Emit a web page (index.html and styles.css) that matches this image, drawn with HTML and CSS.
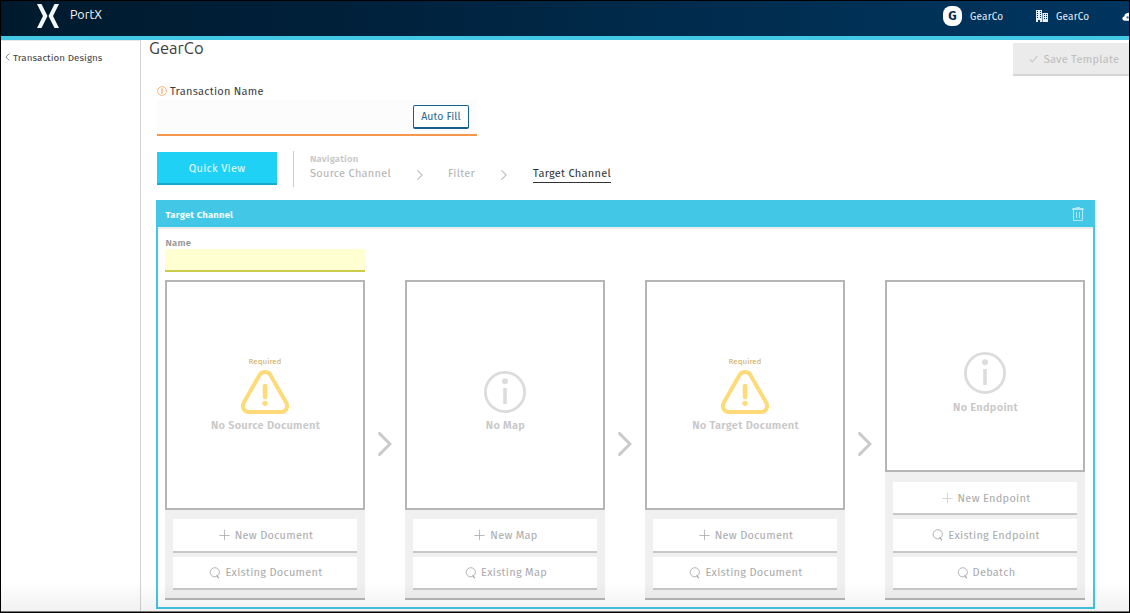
FILE: index.html
```html
<!DOCTYPE html>
<html lang="en">
<head>
<meta charset="utf-8">
<title>PortX</title>
<link rel="stylesheet" href="styles.css">
</head>
<body>
<svg width="0" height="0" class="defs">
  <symbol id="plus" viewBox="0 0 12 12"><path d="M5.500 .8v10.400M.3 6.500h10.400" fill="none" stroke="currentColor" stroke-width=".8"/></symbol>
  <symbol id="search" viewBox="0 0 12 12"><circle cx="5.800" cy="5.300" r="4.600" fill="none" stroke="currentColor" stroke-width=".9"/><path d="M7.600 8 9.800 11.400" fill="none" stroke="currentColor" stroke-width="1.200"/></symbol>
  <symbol id="chev" viewBox="0 0 14 24"><path d="M1.500 1.500 12 12 1.500 22.500" fill="none" stroke="currentColor" stroke-width="3" stroke-linecap="round" stroke-linejoin="round"/></symbol>
  <symbol id="info" viewBox="0 0 42 42"><circle cx="21" cy="21" r="19.600" fill="none" stroke="currentColor" stroke-width="2.800"/><circle cx="21" cy="10.300" r="3" fill="currentColor"/><path d="M21 17v16" stroke="currentColor" stroke-width="3.600"/></symbol>
  <symbol id="warn" viewBox="0 0 48 44"><path d="M18.600 5.100C20.800 1.100 27.200 1.100 29.400 5.100L45 32.200C47.500 37 45.200 42 40 42H8C2.800 42 .5 37 3 32.200Z" fill="none" stroke="currentColor" stroke-width="4"/><path d="M24 16v11" stroke="currentColor" stroke-width="4.600" stroke-linecap="round"/><circle cx="24" cy="33.300" r="2.600" fill="currentColor"/></symbol>
</svg>
<div class="frame">
  <header class="top">
    <svg class="logo" width="24" height="26" viewBox="0 0 24 26"><path d="M1 1h4.500l6 12-6 12H1l6-12zM23 1h-4.500l-6 12 6 12H23l-6-12z" fill="#f4f7fa"/></svg>
    <span class="brand">PortX</span>
    <span class="avatar">G</span>
    <span class="org user">GearCo</span>
    <svg class="building" width="12" height="12" viewBox="0 0 12 12"><path fill="#e8eef4" fill-rule="evenodd" d="M0 0h6v12H4v-2H2v2H0zM1 1v1h1V1zM4 1v1h1V1zM1 3v1h1V3zM4 3v1h1V3zM1 5v1h1V5zM4 5v1h1V5zM1 7v1h1V7zM4 7v1h1V7zM6.500 3H12v9H6.500zM8 4v1h1V4zM10 4v1h1V4zM8 6v1h1V6zM10 6v1h1V6zM8 8v1h1V8zM10 8v1h1V8z"/></svg>
    <span class="org">GearCo</span>
    <svg class="cloud" width="15" height="9" viewBox="0 0 15 9"><path fill="#fff" d="M3 8.700C-.5 8.500-.3 4.800 2.300 4.500 2.500 1.500 6 .2 8 1.200c3 0 5 7.500 4 7.500z"/><circle cx="5.600" cy="5.400" r="1.200" fill="#3b6b96"/></svg>
  </header>
  <div class="body">
    <nav class="side"><svg width="5" height="8" viewBox="0 0 5 8"><path d="M4.300.5.900 4l3.400 3.500" fill="none" stroke="#888"/></svg><span>Transaction Designs</span></nav>
    <main class="main">
      <div class="headline">
        <h1>GearCo</h1>
        <button class="save"><svg width="9" height="8" viewBox="0 0 9 8"><path d="M.8 4.500 3.300 7 8.200.8" fill="none" stroke="currentColor" stroke-width="1.100"/></svg><span>Save Template</span></button>
      </div>
      <div class="txn">
        <label class="txn-label"><svg width="10" height="10" viewBox="0 0 10 10"><circle cx="5" cy="5" r="4.400" fill="none" stroke="#f9b072" stroke-width=".9"/><path d="M5 2.300v5.400" stroke="#f5924a"/></svg><span>Transaction Name</span></label>
        <div class="txn-field"><button class="auto">Auto Fill</button></div>
      </div>
      <div class="steps">
        <button class="quick">Quick View</button>
        <div class="crumbs">
          <div class="nav-title">Navigation</div>
          <div class="trail">
            <span class="c1">Source Channel</span><svg class="sep s1"><use href="#chev"/></svg><span class="c2">Filter</span><svg class="sep s2"><use href="#chev"/></svg><span class="c3">Target Channel</span>
          </div>
        </div>
      </div>
      <section class="panel">
        <div class="panel-head"><span>Target Channel</span>
          <svg width="12" height="14" viewBox="0 0 12 14"><path d="M0 2.500h12M4 .6h4M.5 1.500h11M1.500 3v10.500h9V3M4.500 5v6M7.500 5v6" fill="none" stroke="#b5e9f5" stroke-width="1"/></svg></div>
        <div class="panel-body">
          <div class="name-label">Name</div>
          <div class="name-field"></div>
          <div class="cards">
            <article class="card">
              <div class="box"><span class="req">Required</span><svg class="warn"><use href="#warn"/></svg><b>No Source Document</b></div>
              <div class="acts"><button><svg><use href="#plus"/></svg><span>New Document</span></button><button><svg><use href="#search"/></svg><span>Existing Document</span></button></div>
            </article>
            <svg class="arrow"><use href="#chev"/></svg>
            <article class="card">
              <div class="box optional"><svg class="info"><use href="#info"/></svg><b>No Map</b></div>
              <div class="acts"><button><svg><use href="#plus"/></svg><span>New Map</span></button><button><svg><use href="#search"/></svg><span>Existing Map</span></button></div>
            </article>
            <svg class="arrow"><use href="#chev"/></svg>
            <article class="card">
              <div class="box"><span class="req">Required</span><svg class="warn"><use href="#warn"/></svg><b>No Target Document</b></div>
              <div class="acts"><button><svg><use href="#plus"/></svg><span>New Document</span></button><button><svg><use href="#search"/></svg><span>Existing Document</span></button></div>
            </article>
            <svg class="arrow"><use href="#chev"/></svg>
            <article class="card tall">
              <div class="box optional"><svg class="info"><use href="#info"/></svg><b>No Endpoint</b></div>
              <div class="acts"><button><svg class="faint"><use href="#plus"/></svg><span>New Endpoint</span></button><button><svg><use href="#search"/></svg><span>Existing Endpoint</span></button><button><svg><use href="#search"/></svg><span>Debatch</span></button></div>
            </article>
          </div>
        </div>
      </section>
    </main>
  </div>
  <div class="shade"></div>
</div>
</body>
</html>
```
FILE: styles.css
```css
* { box-sizing: border-box; }
body { margin: 0; width: 1130px; height: 613px; overflow: hidden; font-family: "Fira Sans", "Noto Sans", sans-serif; color: #333; }
button { font: inherit; border: 0; padding: 0; margin: 0; background: none; display: flex; align-items: center; justify-content: center; white-space: nowrap; }
svg { display: block; flex: none; }
span, b { white-space: nowrap; }
.defs { position: absolute; }
.frame { position: relative; display: flex; flex-direction: column; width: 1130px; height: 613px; border: 1px solid #000; background: #fff; overflow: hidden; }

.top { flex: none; height: 39px; display: flex; padding-left: 35px; border-bottom: 4px solid #42c8e4; background: linear-gradient(90deg, #001a2d, #00203a 30%, #003055 75%, #00355f); color: #e9eff4; }
.logo { margin-top: 2px; }
.brand { margin: 5px 0 0 10px; width: 873px; flex: none; font-family: Ubuntu, "Fira Sans", "Noto Sans", sans-serif; font-size: 12.500px; line-height: 17px; color: #f4f8fb; }
.avatar { flex: none; width: 19px; height: 20px; margin-top: 5px; border-radius: 8px; background: #fff; color: #022f52; font-size: 13px; line-height: 20px; font-weight: 700; text-align: center; }
.org { flex: none; margin: 9px 0 0 8px; width: 66px; font-size: 10px; line-height: 14px; letter-spacing: .2px; }
.building { margin-top: 9px; }
.cloud { margin-top: 11px; }

.body { flex: 1; display: flex; min-height: 0; }
.side { width: 140px; flex: none; display: flex; gap: 3px; padding: 10px 0 0 4px; border-right: 1px solid #d2d2d2; border-top: 1px solid #e8e8e8; font-size: 9.800px; line-height: 14px; letter-spacing: .05px; color: #444; }
.side svg { margin-top: 2px; }
.main { flex: 1; min-width: 0; }
.headline { display: flex; justify-content: space-between; height: 43px; padding-left: 8px; }
h1 { margin: -4px 0 0; font-family: Ubuntu, "Fira Sans", "Noto Sans", sans-serif; font-size: 16.500px; line-height: 25px; font-weight: 400; color: #3c3c3c; }
.save { width: 116px; height: 33px; margin-top: 3px; padding: 1px 0 0 6px; gap: 6px; background: #ebebeb; border-bottom: 2px solid #d5d5d5; color: #bdbdbd; font-size: 11px; letter-spacing: .28px; }
.save svg { color: #c8c8c8; }
.txn { margin-left: 16px; width: 320px; }
.txn-label { display: flex; align-items: center; height: 17px; padding-bottom: 1px; gap: 3px; font-size: 11px; letter-spacing: .25px; color: #3c3c3c; }
.txn-field { height: 36px; display: flex; justify-content: flex-end; padding: 5px 8px 0 0; background: #fcfcfc; border-bottom: 2px solid #f5984e; }
.auto { width: 56px; height: 24px; border: 1px solid #17608c; border-bottom-width: 2px; border-radius: 2px; background: #fff; color: #286890; font-size: 10.500px; letter-spacing: .1px; }
.steps { display: flex; height: 64px; margin-left: 16px; padding-top: 15px; }
.quick { width: 120px; height: 33px; margin-top: 1px; padding-top: 1px; background: #1fd1f5; border-bottom: 2px solid #18a9c8; color: #e6faff; font-size: 11px; letter-spacing: .27px; }
.crumbs { height: 36px; margin-left: 16px; padding-left: 16px; border-left: 1px solid #ccc; }
.nav-title { padding-top: 1px; height: 15px; line-height: 14px; font-size: 9.500px; letter-spacing: .2px; font-weight: 600; color: #c8c8c8; }
.trail { display: flex; font-size: 11px; line-height: 16px; letter-spacing: .27px; color: #b2b2b2; }
.c1 { width: 107px; }
.sep { width: 6px; height: 10px; margin-top: 4px; color: #c4c4c4; }
.c2 { margin-left: 25px; width: 53px; }
.c3 { margin-left: 26px; height: 17px; color: #333; border-bottom: 1px solid #333; }

.panel { width: 939px; height: 409px; margin-left: 15px; border: 2px solid #42c8e4; border-top: 0; }
.panel-head { display: flex; align-items: center; justify-content: space-between; height: 29px; padding: 2px 9px 0 7.500px; background: #42c8e6; border-bottom: 2px solid #eaeced; color: #f3fcff; font-size: 9.500px; letter-spacing: .2px; font-weight: 700; }
.panel-head svg { margin-bottom: 1px; }
.panel-body { padding: 7px 7px 0; }
.name-label { height: 13px; padding-left: .5px; font-size: 9.500px; line-height: 14px; letter-spacing: .2px; font-weight: 600; color: #999; }
.name-field { width: 200px; height: 23px; background: #ffffd2; border-bottom: 2px solid #cccb4c; }
.cards { display: flex; margin-top: 8px; }
.card { width: 200px; height: 320px; display: flex; flex-direction: column; background: #f0f0f0; border-bottom: 2px solid #b6b6b6; }
.box { height: 230px; display: flex; flex-direction: column; align-items: center; justify-content: center; border: 2px solid #b5b5b5; background: #fff; }
.box.optional { padding-top: 14px; }
.tall .box { height: 192px; }
.box b { line-height: 16px; margin-top: 4px; padding-left: 1px; font-size: 11px; letter-spacing: .28px; font-weight: 600; color: #c8c8c8; }
.box.optional b { margin-top: 5px; }
.tall .box.optional { padding-top: 15px; }
.tall .box.optional b { margin-top: 6px; }
.req { font-size: 8px; line-height: 10px; color: #d0ad55; margin-bottom: 3px; }
.warn { width: 48px; height: 44px; color: #ffda79; }
.info { width: 42px; height: 42px; color: #dcdcdc; }
.acts { display: flex; flex-direction: column; gap: 4px; padding: 9px 8px 0; }
.tall .acts { padding-top: 10px; }
.acts button { height: 34px; gap: 4px; padding-left: 2px; background: #fff; border-bottom: 2px solid #c8c8c8; color: #aaa; font-size: 11px; letter-spacing: .27px; }
.acts button:last-child { height: 33px; }
.tall .acts button:first-child { height: 33px; padding-top: 1px; }
.acts svg { width: 12px; height: 12px; color: #aaa; }
.acts .faint { color: #ccc; }
.arrow { width: 14px; height: 24px; margin: 152px 13px 0; color: #cacaca; }
.shade { position: absolute; left: 0; right: 0; bottom: 0; height: 30px; border-bottom: 1px solid #777; background: linear-gradient(transparent, rgba(0,0,0,.055)); }
```
